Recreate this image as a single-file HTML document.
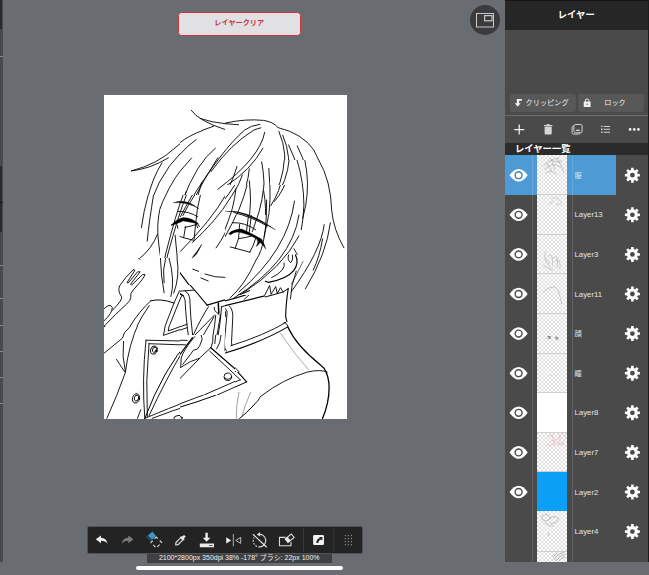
<!DOCTYPE html>
<html lang="ja">
<head>
<meta charset="utf-8">
<title>レイヤー</title>
<style>
*{box-sizing:border-box;margin:0;padding:0}
html,body{width:649px;height:575px;overflow:hidden}
body{background:#696c71;font-family:"Liberation Sans","Noto Sans CJK JP",sans-serif;position:relative;color:#fff}
.abs{position:absolute}
#leftstrip{left:0;top:0;width:2.700px;height:562px;background:#48494b}
#leftstrip i{position:absolute;left:0;width:2.700px;height:1px;background:#85878a}
#leftstrip b{position:absolute;left:0;width:2.400px;background:#2a2a2c}
#clearbtn{left:178px;top:12px;width:122.5px;height:23.5px;border:1.700px solid #cf3438;border-radius:3.500px;background:#e1e1e5;color:#cc3238;font-weight:bold;font-size:7.150px;text-align:center;line-height:21px}
#pip{left:470px;top:5px;width:30px;height:30px;border-radius:50%;background:#3b3b3d}
#canvas{left:104px;top:95px;width:243px;height:323.5px;background:#fff;overflow:hidden}
#panel{left:505px;top:0;width:144px;border-right:1px solid #1c1c1c;height:562px;background:#4a4a4a;overflow:hidden}
#phead{left:0;top:0;width:144px;height:30px;background:#262626;border-top:1.5px solid #151515;text-align:center;font-weight:bold;font-size:9.300px;padding-right:1.500px;line-height:28px}
.pbtn{top:93.5px;height:18.5px;background:#585858;border-radius:3px;font-size:7.200px;line-height:18px;color:#f0f0f0}
#hr1{left:0;top:114.5px;width:144px;height:1px;background:#6e6e6e}
#lhead{left:0;top:143px;width:144px;height:12px;background:#2b2b2b;font-weight:bold;font-size:9.300px;line-height:12px;padding-left:10px;white-space:nowrap}
#sel{left:0;top:155px;width:111px;height:39.800px;background:#4d9ad5}
.vline{top:155px;width:1.300px;height:407px;background:rgba(255,255,255,0.13)}
#thumbs{left:32px;top:155px;width:30px;height:407px;background-color:#fff;
 background-image:linear-gradient(45deg,#e0e0e0 25%,transparent 25%,transparent 75%,#e0e0e0 75%),linear-gradient(45deg,#e0e0e0 25%,transparent 25%,transparent 75%,#e0e0e0 75%);
 background-size:4px 4px;background-position:0 0,2px 2px}
#thumbs i{position:absolute;left:0;width:30px;height:1px;background:#cfcfcf}
.lname{left:69.5px;font-size:7.8px;color:#e4e4e4;height:12px;line-height:12px;white-space:nowrap}
.eye{left:4.5px;width:18px;height:12px}
.gear{left:120px;width:15px;height:15px}
#toolbar{left:87px;top:526px;width:275.5px;height:27.700px;background:#232323;border:1px solid #505255;border-radius:2px}
#status{left:147px;top:553.700px;width:184.500px;height:9.300px;background:#3f4042;font-size:7px;line-height:8.5px;text-align:center;color:#f2f2f2;white-space:nowrap}
#homebar{left:136px;top:566.3px;width:207px;height:4.2px;border-radius:2.2px;background:#fff}
.lname.cjk{font-size:7.200px}
</style>
</head>
<body>
<div id="leftstrip" class="abs"><b style="top:0;height:29px"></b><i style="top:55.500px"></i><b style="top:166px;height:66px"></b><i style="top:202px;background:#1a1a1a"></i><i style="top:265px"></i><i style="top:298.0px"></i><i style="top:324.5px"></i><i style="top:350.5px"></i><i style="top:377.0px"></i><i style="top:403.0px"></i></div>
<div id="clearbtn" class="abs">レイヤークリア</div>
<div id="pip" class="abs"><svg width="30" height="30" viewBox="470 5 30 30"><rect x="476.5" y="13.5" width="17" height="13.5" fill="none" stroke="#c9c9c9" stroke-width="1"/><rect x="484.6" y="15.6" width="7.4" height="5.2" fill="none" stroke="#c9c9c9" stroke-width="1.2"/></svg></div>
<div id="canvas" class="abs"><svg class="abs" style="left:0;top:0" width="243" height="323.500" viewBox="104 95 243 323.500" fill="none" stroke="#000" stroke-width="0.9" stroke-linecap="round" stroke-linejoin="round">
<defs>
<clipPath id="c0"><rect x="100" y="90" width="125" height="40"/><rect x="100" y="130" width="80" height="65"/></clipPath>
<clipPath id="c1"><rect x="225" y="90" width="45" height="40"/><rect x="270" y="90" width="80" height="70"/></clipPath>
<clipPath id="c2"><rect x="100" y="195" width="60" height="63"/></clipPath>
<clipPath id="c3"><rect x="0" y="0" width="0" height="0"/></clipPath>
<clipPath id="c4"><rect x="0" y="0" width="0" height="0"/></clipPath>
<clipPath id="c5"><rect x="0" y="0" width="0" height="0"/></clipPath>
<clipPath id="c6"><rect x="160" y="195" width="65" height="60"/><rect x="160" y="255" width="20" height="3"/></clipPath>
<clipPath id="c7"><rect x="225" y="215" width="59" height="45"/><rect x="284" y="215" width="6" height="39"/></clipPath>
<clipPath id="c8"><rect x="180" y="255" width="45" height="30"/><rect x="225" y="260" width="25" height="35"/></clipPath>
<clipPath id="c9"><rect x="100" y="258" width="80" height="68"/></clipPath>
<clipPath id="c10"><rect x="235" y="355" width="20" height="17"/></clipPath>
<clipPath id="c11"><rect x="250" y="260" width="15" height="35"/><rect x="265" y="260" width="85" height="62"/><rect x="284" y="254" width="66" height="6"/></clipPath>
<clipPath id="c12"><rect x="100" y="326" width="80" height="96"/></clipPath>
<clipPath id="c13"><rect x="180" y="395" width="75" height="27"/><rect x="235" y="372" width="20" height="23"/></clipPath>
<clipPath id="c14"><rect x="265" y="322" width="85" height="33"/><rect x="255" y="355" width="95" height="67"/></clipPath>
<clipPath id="c15"><rect x="180" y="285" width="45" height="50"/></clipPath>
<clipPath id="c16"><rect x="270" y="160" width="20" height="25"/><rect x="290" y="160" width="60" height="95"/></clipPath>
<clipPath id="c17"><rect x="180" y="130" width="45" height="65"/><rect x="225" y="120" width="45" height="65"/></clipPath>
<clipPath id="c18"><rect x="180" y="335" width="45" height="60"/><rect x="225" y="355" width="10" height="40"/></clipPath>
<clipPath id="c19"><rect x="225" y="295" width="40" height="60"/></clipPath>
<clipPath id="c20"><rect x="225" y="185" width="65" height="30"/></clipPath>
</defs>
<g clip-path="url(#c0)">
<path d="M 191.1 110.2 Q 198.2 120.8 225 129.5 M 200.2 118.5 Q 211.7 122.4 225 123.7 M 213.6 126.2 Q 190.5 133.3 175.1 147.8 Q 157.8 164.2 131.4 170.9 M 131.4 170.9 Q 150.1 169 168.4 157.8 M 162 162.8 Q 152 178.6 147.2 200 M 196.3 139.7 Q 165.5 161.3 151.6 200 M 191.5 157.4 Q 173.2 176.7 163.6 200 M 215.6 147.8 Q 194.4 167 182.8 200 M 225 148.7 Q 204 172.8 190.5 200 M 225 154.5 Q 207.9 176.7 196.3 200 M 225 185.3 L 217.9 188.6"/>
</g>
<g clip-path="url(#c1)">
<path d="M 225 123.1 Q 246.2 118.5 263.5 120.4 Q 273.2 121.8 278 127.6 Q 302 133.3 313.6 149.7 Q 325.2 170.9 330.9 200 M 225 123.7 L 238.5 124.7 M 265.4 133.3 Q 259.7 157.4 225 184.4 M 262.6 146.8 Q 250 167 230.8 180.5 M 278.9 131.4 Q 288.6 153.6 282.8 178.6 Q 279.9 190.2 275.5 200 M 282.8 135.3 Q 292.4 157.4 286.6 180.5 Q 282.8 192.1 276.6 198.8 M 288.6 144.9 Q 301.1 170.9 304 200 M 297.2 145.9 Q 309.7 169 309.7 200 M 261.6 162.2 Q 265.4 180.5 263.5 200 M 268.3 167 Q 271.2 184.4 267.8 200 M 249.1 169 Q 249.7 186.3 251.6 200 M 244.3 169.4 Q 236.6 186.3 228.9 200 M 236.2 167 Q 230.8 180.5 225 192.1 M 247.7 182.4 Q 243.3 192.1 239.4 200"/>
</g>
<g clip-path="url(#c2)">
<path d="M 148.2 195 Q 143.3 212.3 141.4 227.7 M 153.5 195 Q 149.1 222 147.2 241.2 M 163.6 195 Q 156.8 216.2 157.8 233.5 Q 152 248.9 138.5 259.5 M 157.8 234.5 Q 159.7 256.6 163.6 272 L 162.8 293.2 M 184.7 195 Q 173.2 225.8 163.6 266.3 M 190.5 195 Q 177 227.7 167.8 258.6 M 174.2 233.5 Q 165.5 254.7 176.1 287.4 M 169 256.6 Q 176.1 279.7 172.2 295.2 M 200.2 195 Q 190.5 218.1 180.5 241.2 M 196.3 195 Q 188.6 210.4 182.8 220 M 176.1 204.6 Q 188.6 201.7 197.8 210 M 179.9 211.9 Q 188.6 212.3 196.3 215.8 M 196.3 221 L 199.2 228.7 M 194 220 L 196.3 226.2 M 184.2 228.1 L 183.2 237 L 192.8 240.5 M 195.3 224.3 L 194.4 237 M 184.4 228.1 Q 188.6 225.8 194.8 225.8 M 225 196 Q 207.9 222 192.4 240.3 Q 186.7 246 179.9 251.2 M 225 201.7 Q 209.8 223.9 193.4 241.2 M 179 273 Q 186.7 283.6 207.9 305 M 192.1 269.2 L 200.2 271.7 M 205 274 Q 215.6 277.4 225 276.9 M 200.2 278.2 L 207.1 280.3 M 225 233.5 Q 220.4 241.2 217.5 247.4 M 118.3 287.1 Q 125 277.8 134.3 269.7 L 135.4 272 Q 130.8 277.8 128.9 282.1 L 130.8 283.6 Q 134.7 276.9 138.9 272 L 141.2 273.6 Q 136.6 279.7 132.7 285.5 L 134.7 286.7 Q 138.5 279.7 143.5 274.7 L 145.5 276.9 Q 140.4 283.6 136.6 288.6 Q 130.8 295.2 129.3 302.9 L 125 305 M 118.3 287.1 Q 119.3 293.2 122.1 299 Q 121.2 302.9 118.3 305 M 108.7 303.4 L 111.9 305 M 146.2 303.8 Q 157.8 298 174.2 302.1 M 172.8 305 L 180.9 292.3 Q 184.7 291.3 186.3 294.2 L 190.1 305 M 177 305 L 182.4 295.5 L 185.7 305 M 215.6 305 L 225 302.9"/>
<path stroke-width="0.8" d="M 173.2 202.3 Q 186.7 199.2 199.2 208.1"/>
<path stroke-width="2.0" d="M 171.6 225.2 Q 179 217.7 190.5 218.5 Q 197.3 220 200.2 224.3"/>
<path stroke-width="1.6" d="M 200.2 246 Q 196.3 251.8 193.4 257"/>
</g>
<g clip-path="url(#c3)">
<path stroke-width="0.8" d="M 226.5 211.4 Q 250 211.4 275.5 230.1"/>
<path d="M 232.7 214.3 Q 252 214.3 272.2 226.8 M 227.9 232.6 L 233.7 230.6 M 228.9 235.8 L 234.6 231.6 M 259.7 238.3 L 262.9 244.7 M 258.7 242.2 L 260.8 247.4 M 240 223.9 L 237.7 238.9 L 235 248.5 M 230.8 246.6 L 251.6 252.4 L 254.3 237.8 M 237.7 238.9 Q 246.2 237.8 253.9 237 M 232.7 223.9 Q 244.3 224.3 253.9 227.7 M 233.7 195 L 225 205.6 M 244.3 195 Q 236.6 214.3 227.3 230.6 M 251 195 Q 247.7 212.3 246.6 226.8 M 262.6 195 Q 257.4 216.2 254.3 233.5 M 266.4 195 Q 263.1 222 262.8 245.1 M 271.2 195 Q 268.3 206.6 267 222 M 278.9 195 L 270.8 206.6 M 294.7 200.8 Q 288.6 233.5 244.3 285.5 M 299.2 214.3 Q 290.5 248.9 236.6 292.3 M 299.2 235.8 Q 282.8 262.4 246.2 291.3 M 304.4 195 Q 303 210.4 299.2 226.8 M 307.8 195 L 305.9 206.6 M 330 195 Q 331.9 223.9 343.5 248.5 M 325.2 224.3 Q 321.3 252.8 304.9 287.8 M 321.3 239.7 Q 319.4 258.6 309.7 280.1 M 303 261.4 Q 296.3 275.9 292 291.3 M 256.2 252.8 Q 246.2 275.9 231.7 293.2 M 290.5 253.7 Q 286.2 259.5 289.7 263.6 Q 294 259.5 290.5 253.7 M 285.1 262.8 Q 284.7 271.1 271.2 275.9 M 264.5 297.1 L 269.7 285.9 L 272.2 293.6 L 275.7 287.1 L 278.2 293.2 L 288.6 287.8 M 288.9 287.4 Q 288.6 297.1 286.6 305 M 294.7 279.4 Q 290.5 289.4 291.6 297.5 M 240.4 301.9 Q 263.5 297.1 287.6 289"/>
<path stroke-width="2.0" d="M 227.9 233.9 Q 235.6 228.1 248.1 232.6 Q 259.7 237.8 264.5 247.4"/>
<path stroke-width="1.0" d="M 293.4 248.9 Q 299.2 258.6 294.3 270.1 Q 286.6 280.7 266.4 282.1"/>
<path stroke-width="1.6" d="M 225 300.5 Q 240.4 296.1 252 289.4"/>
</g>
<g clip-path="url(#c4)">
<path d="M 104.7 309.6 Q 110.6 303.2 114.4 306.8 Q 111.7 314.9 104.7 321.2 M 113.2 300 Q 121.2 305.3 130.8 300 M 104.2 352 L 123.8 334 L 125.5 331.8 Q 136.1 317 151.4 301.1 M 104.7 327.2 Q 119.1 315.9 134 300 M 123.8 342.4 Q 120.2 359.4 125.5 373.2 M 117 359.8 L 124.6 372.6 M 149.9 306.4 Q 131.8 334 126.5 370 Q 117 395.5 106.4 418.4 M 145.6 341.4 L 184.9 344.1 M 145.6 341.4 Q 142.4 380.6 144.6 418.4 M 148.8 345 Q 146.3 384.9 148 415.7 M 148.8 345 L 179.6 346.3 M 184.9 344.1 Q 163.7 370 145 418.4 M 180.6 355.6 Q 161.5 387 149.2 414.6 M 143.5 418 Q 170 406.1 225 386.6 M 152 418 Q 184.9 404 225 391.7 M 138.2 410.4 L 137.1 418.4 M 176.8 300 L 163.2 334.4 L 191.3 325 M 182.8 300 L 168.3 330.1 L 187.4 323.8 M 184.9 300 Q 189.1 312.7 191.3 325 M 213.5 315.9 L 181.7 355.2 L 180.2 367.5 L 193.4 358.4 L 210.4 350.1 L 215.7 331.8 Z M 184.9 357.3 L 193.4 347.8 L 196.6 350.9 L 200.8 342.4 L 204 344.6 L 210.4 321.2 M 201.9 300 L 210.4 305.3 L 218.8 302.1 L 225 300 M 215.7 308.5 L 217.8 312.7 M 216.3 311.7 Q 219.3 331.8 215.7 349.2 M 219.9 307.4 L 221.4 342.4 M 210.4 350.1 L 225 362 M 215.7 349.2 L 225 355.6"/>
<ellipse cx="153.7" cy="349.9" rx="2.8" ry="3.6" transform="rotate(20 153.7 349.9)"/>
<ellipse cx="154.3" cy="349.4" rx="1.7" ry="2.3" transform="rotate(20 154.3 349.4)"/>
<ellipse cx="135.7" cy="398.0" rx="3.2" ry="4.2" transform="rotate(15 135.7 398.0)"/>
<ellipse cx="136.3" cy="397.6" rx="1.9" ry="2.8" transform="rotate(15 136.3 397.6)"/>
<ellipse cx="178.1" cy="417.1" rx="3.4" ry="1.7" transform="rotate(-15 178.1 417.1)"/>
<ellipse cx="157.3" cy="418.4" rx="3.0" ry="1.5" transform="rotate(-15 157.3 418.4)"/>
<ellipse cx="206.7" cy="335.7" rx="1.5" ry="2.5" transform="rotate(25 206.7 335.7)"/>
<ellipse cx="225.0" cy="376.8" rx="2.1" ry="3.0" transform="rotate(20 225.0 376.8)"/>
</g>
<g clip-path="url(#c5)">
<path d="M 225 308.1 L 230.3 305.9 L 259 300 M 230.3 306.4 L 229.7 345.6 M 225 352 Q 256.8 343.5 288 326.5 M 230.3 346.3 Q 259 338.2 285.5 322.9 M 232.6 307.6 L 231.4 345 M 289.1 300 Q 285.5 312.7 288 326.5 M 326.9 370.5 Q 295 371.1 260 396.6 Q 254.7 406.1 240.9 418.4 M 225 360.1 L 246.2 381.7 L 225 392.7 M 225 366.2 L 240.3 380.6 L 225 387.4"/>
<path stroke-width="1.2" d="M 288 326.5 Q 297.2 344.6 326.9 370 Q 331.1 391.3 322.6 418.4"/>
<path stroke-width="0.6" stroke="#666" d="M 279.1 332.3 Q 290.8 353.1 307.8 369.2"/>
<path stroke-width="0.6" stroke="#555" d="M 238.2 393.4 Q 235.6 406.1 240.3 418 M 250.5 392.7 Q 245.2 404 243 415"/>
<ellipse cx="227.5" cy="376.4" rx="3.2" ry="3.4" transform="rotate(0 227.5 376.4)"/>
<ellipse cx="227.1" cy="376.0" rx="1.7" ry="1.9" transform="rotate(0 227.1 376.0)"/>
</g>
<g clip-path="url(#c6)">
<path d="M 177.8 211.4 Q 189.1 211.2 197.8 216.8 M 196.7 222.5 L 199.4 226.5 M 196.1 223.6 L 197.8 227.9 M 171.6 224.7 L 174.6 223.3 M 185.5 226.5 L 183.7 237.6 M 195.6 224.3 L 194.1 239.4 M 180 236.5 L 183.9 237.8 L 193.7 240.3 M 185 227.4 Q 190.2 226.3 194.7 225 M 177.3 225.2 L 177.8 228.4 M 183.2 195 Q 176.2 212.3 165.4 255 L 164.7 258.4 M 186.4 195 Q 178.9 213.3 167.6 255 L 166.9 258.4 M 192.4 195 Q 185.3 206.9 180.5 216.6 M 194.7 195 Q 188 205.2 182.9 215.5 M 200.4 195 Q 196.7 209 195.6 224.3 M 165.9 195 Q 162.2 201.5 160 209 M 175.1 235.1 L 177 255 L 177.3 258.4 M 225.8 195 Q 211.8 219.8 180.5 251.3 M 230 198.8 Q 216.1 220.9 192.4 242.5 M 230 211.2 L 226.3 211.7 M 229.6 220.3 Q 226.9 232.8 216.1 247.9 M 230 232.8 L 228 234.4"/>
<path fill="#000" stroke-width="0.300" d="M 173.5 202.6 Q 185.9 198 199 208.7 Q 187 201.7 173.5 202.6 Z M 171.3 225.2 Q 176.2 218.9 183.2 217.4 Q 192.4 217.7 198.8 224.1 Q 192.4 222.2 183.2 220.9 Q 177.3 223.7 171.3 225.4 Z M 201.8 244.4 Q 199 250.5 195.8 255.2 L 194.1 255.2 Q 197.2 251.1 200.8 245.5 Z"/>
</g>
<g clip-path="url(#c7)">
<path d="M 234 212.5 Q 252.4 217.3 267.5 226.1 M 232.4 222.7 Q 244.8 222.1 255.6 229.7 M 239.6 224.3 L 238.6 238.3 L 235.1 248.5 M 230.2 246.9 L 250 252.2 M 255.6 238.6 Q 253.4 246.4 249.8 252.2 M 238.6 238.6 Q 245.9 237.8 251.3 236.1 M 234.6 200 Q 229.7 219.4 220 241.8 M 242.9 200 Q 234 221.6 221.6 243.1 M 250.7 200 Q 248.3 216.2 246.5 231.3 M 252.6 200 Q 251.5 216.2 249.3 232.4 M 262.6 200 Q 257.8 216.2 252.4 231.5 M 270.7 200 Q 268.5 219.4 264 237.2 M 276.1 200 L 271.6 205.9 M 226.7 200 Q 223.2 205.4 220 210.2 M 222.2 200 L 220 203"/>
<path fill="#000" stroke-width="0.300" d="M 225.9 211.3 Q 247 209.3 275.5 229.9 Q 252.4 216.2 236.2 212.2 Q 230.8 211.4 225.9 211.3 Z M 228.6 233.7 Q 232.9 229.1 241.6 229.1 Q 252.4 233.7 261.5 239 Q 264.2 243.1 265.8 249.1 Q 262.6 244.4 260.1 242.6 Q 258.3 245.3 256.1 246.6 Q 259 242.3 256.7 239 Q 248 233.7 238.3 232.1 Q 233.5 231.9 230.8 234.7 Z"/>
</g>
<g clip-path="url(#c8)">
<path d="M 180.8 251.4 L 188.5 246 M 192.8 269.2 L 198.6 271.3 M 205.1 274.1 Q 214.4 277.7 224.9 277.4 M 200.8 277.9 L 208.2 281 M 221.2 305.6 Q 236.6 303.6 250 300.5 M 175.2 245 Q 176.2 259.8 179.2 271.5 M 179.2 271.9 Q 176.2 285.7 170 296.8 M 170 257.3 Q 173.7 272.1 173.7 285.7 M 178.6 292.8 L 193.4 290 M 179.2 292.8 L 171.2 313 M 182 294.6 L 174.3 313 M 182 294.3 Q 186.6 290.6 188.5 297.4 L 186.9 313 M 182.6 296.5 Q 185.4 299.2 185 313 M 170 302.3 L 174.3 302.7 M 208.2 305.6 L 204.8 313 M 213.1 307.9 L 215 313 M 223 307.9 L 224.9 313 M 227.9 306 Q 232.2 309.1 231 313 M 230.4 247.2 L 250 252.4 M 236.6 245 L 235.3 248.1"/>
<path stroke-width="1.1" d="M 178.9 271.1 Q 192.2 290.6 208.2 305.4 M 208.2 305.4 Q 229.2 299.2 250 290.4"/>
<path stroke-width="1.2" d="M 218.8 303.2 L 219.6 313"/>
<path fill="#000" stroke-width="0.300" d="M 200.8 245.7 Q 199.1 253.1 191.9 258.3 Q 195.4 252.6 198.6 246.7 Z"/>
</g>
<g clip-path="url(#c9)">
<path d="M 133.3 269.7 Q 124.7 277.7 119.7 285.7 Q 117.3 290.7 121.6 296.8 Q 122.8 299.9 112.3 310.4 M 133.3 269.7 L 134.9 270.3 L 127.1 282.4 L 128.1 283.1 L 137.6 271.8 L 140.1 271.8 L 130.6 284.1 L 131.6 285.1 L 142.5 274.6 L 145 274.6 Q 144.4 277.7 133.3 290 Q 129.6 293.7 130.8 297.4 Q 130.8 300.5 126.5 304.2 Q 116 313.5 104.3 326 M 104.3 308.5 Q 109.9 303 112.3 307.3 Q 112.3 313.5 104.3 320.5 M 150.8 300.8 Q 139.4 311 130.2 326 M 149.3 305.5 Q 141.9 315.9 137 326 M 179.5 290.7 L 174 303 L 165.1 326 M 180 299.3 L 169.3 326 M 160.4 258 Q 161 276.5 164.1 292.8 M 165.6 258 Q 162.2 270.3 164.1 282.7 M 169 258 Q 175.2 280.2 170.9 296.5 M 177 258 Q 180.1 276.5 173.7 293.1 M 138.2 258 L 140.1 259.2"/>
<path stroke-width="1.0" d="M 150.8 300.8 Q 160.4 298.1 174 303"/>
</g>
<g clip-path="url(#c10)">
<path stroke-width="1.2" d="M 218.5 303 L 219.2 313.3"/>
<path d="M 214.4 308.2 L 216.5 313 L 219.2 313.7 M 183.9 313 Q 189.4 317.2 189.4 323.4 L 191.1 335.5 M 190.8 313 L 191.9 322.7 L 193 336.6 M 170 329.9 L 188.3 323.7 M 170 333.6 L 187.8 328 M 170 341 L 186.9 343.1 M 203.3 313 L 191.1 335.9 L 170 369.9 M 213.3 315.8 L 183.2 350.5 L 180.4 367.4 L 195.7 360.2 L 210.5 349.8 Q 214.4 332.4 215.8 315.8 M 183.6 364.3 L 192.9 350.7 L 198.4 347.7 L 200.1 348.5 L 201.6 340.8 L 211.6 319.3 M 219.5 313.7 Q 217.1 331.1 211.9 346.6 M 222 308.9 Q 224.8 306.8 225.5 310.9 L 218.8 346 L 214.1 348.8 M 226.9 308.9 L 224.4 352.6 L 260 341.5 M 231 306.8 Q 233.1 322.7 231.4 346.6 L 260 336.3 M 221.6 307.5 Q 225.5 306.1 231 306.1 L 260 298.5 M 214.1 348.8 Q 229.6 361.6 239.3 372 M 209.5 352.1 L 226.2 372 M 203.3 356.3 L 188 372"/>
<path stroke-width="1.0" d="M 210.9 350.2 Q 225.5 360.2 235.9 372"/>
<ellipse cx="207.2" cy="335.9" rx="1.2" ry="2.9" transform="rotate(25 207.2 335.9)"/>
</g>
<g clip-path="url(#c11)">
<path stroke-width="1.2" d="M 295.5 255 Q 299.3 262.7 293.9 270.4 Q 287 278.9 268.5 282.4 L 265.4 281.2"/>
<path d="M 288.5 255 Q 287 260.4 290.8 262.7 Q 293.9 259.6 292.4 255 M 284.2 263 Q 286.2 270.4 271.6 277.7 M 263.9 296.9 L 269.6 285.5 L 271.1 294.3 L 275.7 286.6 L 277.3 293.5 L 280.4 287.7 L 283.1 292 M 296.2 271.2 Q 290.8 285.8 290.4 298.9 M 267.7 332 L 285.7 322.8 M 279.3 332 L 287.9 326.6"/>
<path stroke-width="1.0" d="M 250 300.9 Q 268.5 296.3 283.1 292 L 288.2 288.6"/>
<path stroke-width="1.1" d="M 288.2 288.6 Q 285.7 305.8 285.7 316.6 Q 287 324.3 291.3 332"/>
</g>
<g clip-path="url(#c12)">
<path d="M 104 353.3 L 122.6 338 L 124.3 332.8 Q 130.4 326.3 134.7 322 M 104 326.9 L 110.8 322 M 123.5 341.5 Q 121.7 356.7 125.4 372 M 116.5 359.4 L 124.7 371.9 M 139.1 322 Q 128.7 344.6 125.4 372.4 Q 117.4 395 106.9 418.4 M 146 340.2 L 186.9 341.1 M 146 340.2 Q 141.7 379.3 144.8 418.4 M 149 343.7 Q 145.5 381.1 147.3 416.7 M 149 343.7 L 182.5 344.9 M 181.7 352.9 Q 166 379.3 149 415.8 M 144.8 418.4 Q 169.5 408 190 400.2 M 152.1 418.4 Q 173 410.3 190 405.1 M 140.8 409.7 L 137.4 418.4 M 166 322 L 163.4 335.4 L 186.9 327.2 M 169.5 323.4 L 168.3 331 L 186.9 324.1 M 190 345.5 Q 183.4 353.3 180.8 367.5 L 190 362.8 M 190 351.5 L 185.1 359.9"/>
<path stroke-width="1.0" d="M 190 339.4 Q 163.4 368.9 144.8 418.4"/>
<ellipse cx="153.9" cy="350.1" rx="3.3" ry="4.2" transform="rotate(20 153.9 350.1)"/>
<ellipse cx="154.4" cy="349.8" rx="1.9" ry="2.6" transform="rotate(20 154.4 349.8)"/>
<ellipse cx="136.0" cy="398.4" rx="3.5" ry="4.7" transform="rotate(15 136.0 398.4)"/>
<ellipse cx="136.5" cy="398.1" rx="2.1" ry="3.0" transform="rotate(15 136.5 398.1)"/>
<ellipse cx="178.2" cy="417.6" rx="4.3" ry="2.1" transform="rotate(-10 178.2 417.6)"/>
</g>
<g clip-path="url(#c13)">
<path stroke-width="1.1" d="M 214.7 350 Q 229.9 362.5 246.6 381.9"/>
<path stroke-width="1.0" d="M 246.6 381.9 Q 214.7 397.1 180 407.1 M 270 390.2 Q 261.8 394.4 259 398.3 Q 254.9 405.5 239.6 418.5"/>
<path d="M 209.8 351.4 L 240.3 379.8 M 240.3 379.8 Q 210.5 393 180 403.8 M 180 354.2 L 181.7 365.9 L 200.8 358.3 L 209.8 351.4 M 184.2 350 L 182.5 363.2 M 180 379.8 Q 191.1 368 202.9 358 M 224.7 353.1 L 235.5 350 M 223.7 378.4 Q 227.8 382.6 231.6 377.7"/>
<path stroke-width="0.5" stroke="#444" d="M 238.9 392.3 Q 236.2 405.5 236.2 418.5 M 250.7 392.3 Q 244.5 405.5 241.7 416.8"/>
<ellipse cx="227.6" cy="376.6" rx="3.9" ry="4.2" transform="rotate(0 227.6 376.6)"/>
<ellipse cx="180.0" cy="418.2" rx="2.5" ry="1.4" transform="rotate(-10 180.0 418.2)"/>
</g>
<g clip-path="url(#c14)">
<path d="M 283.7 322 Q 288.1 323.7 288.1 327.6 M 327.2 372.1 Q 321.1 369 307.2 372.1 Q 282.8 379.4 262 395.4 L 259.9 397.2 Q 258.5 401.2 255 403.8"/>
<path stroke-width="1.3" d="M 288.1 327.6 Q 296.8 346.4 321.1 365.5 Q 327.2 369.8 328.9 382.9 Q 330.2 400.3 322.5 418.4"/>
<path stroke-width="0.5" stroke="#555" d="M 280.2 332.8 Q 292.4 351.6 308.1 369.3"/>
</g>
<g clip-path="url(#c15)">
<path stroke-width="1.0" d="M 178.9 291.3 L 165 324.9 M 165 300.3 L 174.4 302.6 M 177 285 Q 174.2 291.5 170.7 296.6"/>
<path d="M 178.9 291.3 L 193.7 290.1 M 184.9 290.7 Q 189.2 293.3 189.8 298.9 Q 190.4 317.4 192.6 335 M 180.3 293.8 Q 184.4 295.2 185 299.8 Q 186.3 322 188.3 335 M 181.8 295.4 L 166.4 330.5 M 165 332.3 L 186.8 324.3 M 165 335 L 187.2 327.7 M 208.5 306.7 Q 202 316.4 193.2 335 M 214.2 307.2 Q 213.1 310.4 219.1 314.6 M 214.5 315 L 195 335 M 214 316.9 L 203.4 335 M 215.7 315.5 Q 214.9 324.8 213.1 335 M 220.5 314.8 L 217 335 M 221.6 306.7 Q 220.5 322 218.2 335 M 221.4 306.7 L 225 305.8"/>
<path stroke-width="1.3" d="M 180.3 293.8 L 183.3 295.7"/>
<path stroke-width="1.1" d="M 190 285 Q 198.3 294.2 207.1 305.1"/>
<path stroke-width="1.2" d="M 207.1 305.1 L 225 299.8"/>
<path stroke-width="1.5" d="M 218.3 303 L 218.8 313.2"/>
</g>
<g clip-path="url(#c16)">
<path d="M 318.7 160 Q 330.9 180.9 331.7 210.4 Q 333.5 229.6 343.9 247.8 M 297 160 Q 303.9 182.6 303.9 205.2 Q 303.4 219.1 301.3 229.6 M 304.8 160 Q 309.7 182.6 305.7 205.6 L 302.7 218.3 M 284.3 160 Q 283 182.6 270 204.3 M 289.1 160 Q 287.4 180.9 274.3 199.7 M 270 226.1 L 275.2 229.6 M 294 248.7 Q 297.8 253 298.2 260 M 289.1 253.9 L 292.6 260"/>
</g>
<g clip-path="url(#c17)">
<path d="M 203.1 130.3 Q 189.2 135.4 180 142.6 M 196.2 139.6 Q 186.9 146.2 180 154.3 M 191.6 158 L 180 171.3 M 215.4 148.2 Q 196.9 162.4 182.3 201.2 M 260 124.3 Q 250.9 125.4 244.7 130 Q 221.6 150 189.2 202.4 M 260.9 127.8 Q 257 128.8 254 130 Q 230.8 143.9 210.8 171.9 M 217.8 157.7 Q 203.1 180.8 190.8 205 M 264.7 132.3 Q 260.1 157.7 217.8 189.3 M 262.9 148.2 Q 250.9 170.1 226.2 185.8 M 237 166.5 Q 230.8 187 219.3 205 M 242.4 175 Q 235.5 193.2 226.5 205 M 249.3 168.8 Q 247.8 187 238.6 205 M 249.3 180.8 Q 251.2 193.2 251.6 205 M 261.7 161.9 Q 265.5 180.8 263.2 205 M 268.8 168.5 Q 270.9 187 269.4 205 M 280 187.3 Q 275.5 197.8 271.7 205 M 180 201.3 Q 187.7 200.1 194.2 203.7 M 201.6 182.7 Q 197.7 196.3 195.4 205 M 186.2 191.6 L 181.5 205"/>
</g>
<g clip-path="url(#c18)">
<path d="M 165 339.9 L 187.1 340.4 M 165 343.6 L 185.5 344.9 M 194.7 336.6 Q 183.3 350.1 181.2 358.2 L 180.7 367.4 M 180.7 367.4 L 190.3 361.7 L 199.5 358.2 L 210.8 347.7 M 201.1 335 L 202.2 339.3 L 199.7 345.8 L 197.4 349 L 193.3 350.3 L 190.3 354.6 L 182.8 364.3 M 199.5 358.5 L 165 393.8 M 209.8 351.2 L 235 374.7 M 235 381.4 L 204 395 M 235 387 L 217.3 395 M 213 335 Q 213.5 341.5 211.2 347.1 M 215.7 335 L 214.8 343.6 M 221.1 335 Q 220.5 343.6 216.6 349 M 225.4 335 L 225 351.2 L 235 347.1 M 231 335 L 230.4 346 L 235 344.3 M 224.5 377.6 Q 228.1 381.4 231.3 377.3"/>
<path stroke-width="1.2" d="M 192.5 337.7 Q 177.9 356.6 165 376.5 M 210.8 347.7 L 235 368.7"/>
<ellipse cx="227.8" cy="376.8" rx="3.8" ry="3.8" transform="rotate(0 227.8 376.8)"/>
</g>
<g clip-path="url(#c19)">
<path stroke-width="1.1" d="M 199.1 295 L 207.1 304.9 L 218.9 302.3 M 220.9 306.6 Q 240.3 302 265 295.9 M 221.5 306.9 Q 220.9 327.4 214.2 348.1"/>
<path stroke-width="1.3" d="M 218.9 302.3 Q 232.8 299.3 245.7 295"/>
<path stroke-width="1.8" d="M 218.5 303.1 L 219.4 314.2"/>
<path d="M 214.6 307.4 Q 212.8 311.2 219.3 314.4 M 207.1 304.9 L 195 330.8 M 215.3 315.3 Q 204.7 327.4 200.4 338.1 L 199.5 345.7 L 195 348.9 M 213.3 318.7 Q 206.9 329.5 204.2 338.1 M 216 315.3 Q 215 329.5 211.2 347 M 219.6 314.6 Q 217.7 331.7 212.8 346.2 M 223.3 307.7 Q 227.4 308.5 227.1 313.3 L 224.3 342.5 Q 224.1 348.9 226.5 351.3 M 223.9 308.8 Q 226.3 311.2 225.7 316.6 M 229.3 305.8 Q 232.8 309 232.8 316.6 L 231.5 342.5 L 231.9 345.7 M 209 350.2 L 216 355 M 244.1 299.5 L 248.9 295"/>
<path stroke-width="1.2" d="M 211.2 347.3 L 221.4 355"/>
<ellipse cx="207.1" cy="336.5" rx="1.2" ry="3.0" transform="rotate(25 207.1 336.5)"/>
</g>
<g clip-path="url(#c20)">
<path d="M 241.5 175 Q 229.8 193.5 215 212.2 M 243.1 176.2 Q 233.5 194.7 215 220.4 M 239.7 175.6 Q 227.3 183 217.5 189.5 M 236 188.8 Q 233.5 209.5 226.7 225 M 248.9 175 Q 247.3 192.3 232.3 225 M 248.9 180.2 Q 252.6 199.7 248 225 M 264.3 175 Q 264.3 199.7 254.7 225 M 263.7 191 Q 266.8 209.5 264.9 223.1 M 269.2 175 Q 271.7 199.7 267.4 225 M 282.8 175 Q 280.3 191 270.7 205.8 M 287.7 175 Q 285.3 188.6 274.4 201.5 M 295 201.5 L 288 225 M 234 212.5 Q 252.4 217.3 267.5 226.1"/>
<path fill="#000" stroke-width="0.300" d="M 225.9 211.3 Q 247 209.3 275.5 229.9 Q 252.4 216.2 236.2 212.2 Q 230.8 211.4 225.9 211.3 Z"/>
</g>
<path d="M294.5 201 Q288 250 239 292 M299 215 Q292 262 234 298 M299 236 Q282 268 243 293 M266.6 200 Q267 245 256 260 Q245 285 230 298 M324.2 224.7 Q321 251 291.3 291.7 M330.4 222.8 Q326.5 254.2 305.4 288.9 M322.6 238.8 Q319.5 257.3 313.2 270.1 M230.9 345.7 Q265 335 285.7 322.5"/>
<path stroke-width="0.6" d="M303 261.5 Q297.5 273 291.3 284.2"/>
<path stroke-width="1.1" d="M225.4 353 Q262 342 287.8 326.9"/>
</svg></div>
<div id="panel" class="abs">
  <div id="phead" class="abs">レイヤー</div>
  <div class="pbtn abs" style="left:4.5px;width:66px;padding-left:16px">クリッピング</div>
  <div class="pbtn abs" style="left:73px;width:66px;padding-left:26.200px">ロック</div>
  <div id="hr1" class="abs"></div>
  <div id="lhead" class="abs">レイヤー一覧</div>
  <div id="sel" class="abs"></div>
  <div class="vline abs" style="left:27px"></div>
  <div class="vline abs" style="left:67px"></div>
  <div id="thumbs" class="abs"><b style="position:absolute;left:0;top:237.6px;width:30px;height:39.6px;background:#fff"></b><b style="position:absolute;left:0;top:316.8px;width:30px;height:39.6px;background:#0c9ff6"></b><i style="top:39.1px"></i><i style="top:78.7px"></i><i style="top:118.3px"></i><i style="top:157.9px"></i><i style="top:197.5px"></i><i style="top:237.1px"></i><i style="top:276.7px"></i><i style="top:316.3px"></i><i style="top:395.5px"></i><svg style="position:absolute;left:0;top:0" width="30" height="407" viewBox="0 0 30 407" fill="none" stroke="#9b9b9b" stroke-width="0.550" stroke-linecap="round"><path d="M6.600 10.800Q12 4 22.400 2.900M7.700 14.200Q15 6 23.500 12M14.500 5.200L17.900 14.200M20.100 4Q24 8 26.900 17.600M10 8.600L14.500 15.400M12 3Q18 9 25 6M9 18Q14 14 19 19"/><path stroke="#b5b5b5" d="M14.500 43.600Q20 40 24.700 48.200M12.200 49.300L16.800 45.900M19 50Q22 47 25 51"/><path stroke="#a8a8a8" d="M8.800 96.800Q5 104 13.400 112.600M11.100 101.300Q16 95 15.600 110.400M15.600 103.600Q22 96 20.100 112.600M6.600 110.400Q11 114 15.600 114.900M18 106Q24 102 23 114M9 104L13 109"/><path stroke="#9a9a9a" stroke-dasharray="2.500 1.200" d="M6.600 137.600Q9 133 16.800 132Q22 133 23.500 144.400L24.700 149"/><path stroke="#555" stroke-width="0.800" d="M10.800 181.300L13.800 182M11 183L13.500 183.400M18.500 182L21 182.800M18.800 183.800L20.800 184.200"/><path stroke="#c4c4c4" d="M12.500 220.200L14.500 220M18.200 220.200L20 220.500"/><path stroke="#eaa6aa" d="M11 282Q14 278 17 283T23 281T29 284M13 287Q16 283 20 288T27 286M15 279L18 291M22 279Q25 285 21 291M10 290Q14 292 17 289M24 288L29 291"/><path stroke="#9a9a9a" d="M5 361Q10 357 14 363Q10 368 6 365ZM12 364Q17 359 22 364Q18 370 13 368M8 368Q12 372 16 371M11 378L12 381"/><path stroke="#8a8a8a" d="M17 405Q20 399 27 397M19 406Q23 400 28 399M22 406Q25 402 28 402M16 402L20 398"/></svg></div>
<svg class="abs" style="left:0;top:0" width="144" height="160" viewBox="505 0 144 160">
<!-- clipping icon -->
<path fill="#f2f2f2" d="M516.8 98.900H521.9V100.800H519.1V103.300H520.600L517.700 106.800L514.800 103.300H516.800Z"/>
<!-- lock icon -->
<path fill="#f2f2f2" fill-rule="evenodd" d="M584.2 101.6h5.9a.5.5 0 0 1 .5.5v4.3a.5.5 0 0 1-.5.5h-5.9a.5.5 0 0 1-.5-.5v-4.3a.5.5 0 0 1 .5-.5z M586.5 104.2a.7.7 0 1 0 1.4 0a.7.7 0 1 0-1.4 0z"/>
<path fill="none" stroke="#f2f2f2" stroke-width="1" d="M585.3 101.8v-1a1.85 1.85 0 0 1 3.7 0v1"/>
<!-- plus -->
<path stroke="#f4f4f4" stroke-width="1.25" fill="none" d="M514.2 129.5h10M519.2 124.5v10"/>
<!-- trash -->
<path fill="#d6d6d6" d="M544.6 126.6h7.1v6.9a1 1 0 0 1-1 1h-5.1a1 1 0 0 1-1-1z M543.9 124.9h2.6l.6-.9h2.1l.6.9h2.6v1.1h-8.5z"/>
<!-- copy -->
<rect x="572.1" y="126.1" width="8" height="8" rx="1.4" fill="none" stroke="#cfcfcf" stroke-width="1"/>
<rect x="573.9" y="124.5" width="8.2" height="8.2" rx="1.4" fill="#4a4a4a" stroke="#cfcfcf" stroke-width="1"/>
<path fill="#cfcfcf" d="M575.6 130.9l1.5-2 1 1.3.9-.9 1.5 1.600z"/>
<!-- list -->
<path fill="#d0d0d0" d="M601 125.700h1.500v1.400h-1.500z M601 128.600h1.500v1.400h-1.500z M601 131.600h1.500v1.400h-1.500z M603.600 125.900h6.400v1h-6.400z M603.600 128.800h6.400v1h-6.400z M603.600 131.800h6.400v1h-6.400z"/>
<!-- dots -->
<circle cx="630.1" cy="129.400" r="1.350" fill="#f2f2f2"/><circle cx="634.25" cy="129.400" r="1.350" fill="#f2f2f2"/><circle cx="638.4" cy="129.400" r="1.350" fill="#f2f2f2"/>
</svg>

<svg class="abs" style="left:0;top:0" width="144" height="562" viewBox="505 0 144 562">
<path fill="#fff" d="M509.50 175.20 Q518.60 162.60 527.70 175.20 Q518.60 187.80 509.50 175.20Z"/>
<circle cx="518.60" cy="175.20" r="3.45" fill="none" stroke="#3e7fb0" stroke-width="1.4"/>
<path fill="#fff" fill-rule="evenodd" d="M631.02 169.88 L631.15 167.70 L633.65 167.70 L633.78 169.88 L635.19 170.46 L636.81 169.01 L638.59 170.79 L637.14 172.41 L637.72 173.82 L639.90 173.95 L639.90 176.45 L637.72 176.58 L637.14 177.99 L638.59 179.61 L636.81 181.39 L635.19 179.94 L633.78 180.52 L633.65 182.70 L631.15 182.70 L631.02 180.52 L629.61 179.94 L627.99 181.39 L626.21 179.61 L627.66 177.99 L627.08 176.58 L624.90 176.45 L624.90 173.95 L627.08 173.82 L627.66 172.41 L626.21 170.79 L627.99 169.01 L629.61 170.46Z M630.00 175.20 a2.40 2.40 0 1 0 4.80 0 a2.40 2.40 0 1 0 -4.80 0Z"/>
<path fill="#fff" d="M509.50 214.80 Q518.60 202.20 527.70 214.80 Q518.60 227.40 509.50 214.80Z"/>
<circle cx="518.60" cy="214.80" r="3.45" fill="none" stroke="#4a4a4a" stroke-width="1.4"/>
<path fill="#fff" fill-rule="evenodd" d="M631.02 209.48 L631.15 207.30 L633.65 207.30 L633.78 209.48 L635.19 210.06 L636.81 208.61 L638.59 210.39 L637.14 212.01 L637.72 213.42 L639.90 213.55 L639.90 216.05 L637.72 216.18 L637.14 217.59 L638.59 219.21 L636.81 220.99 L635.19 219.54 L633.78 220.12 L633.65 222.30 L631.15 222.30 L631.02 220.12 L629.61 219.54 L627.99 220.99 L626.21 219.21 L627.66 217.59 L627.08 216.18 L624.90 216.05 L624.90 213.55 L627.08 213.42 L627.66 212.01 L626.21 210.39 L627.99 208.61 L629.61 210.06Z M630.00 214.80 a2.40 2.40 0 1 0 4.80 0 a2.40 2.40 0 1 0 -4.80 0Z"/>
<path fill="#fff" d="M509.50 254.40 Q518.60 241.80 527.70 254.40 Q518.60 267.00 509.50 254.40Z"/>
<circle cx="518.60" cy="254.40" r="3.45" fill="none" stroke="#4a4a4a" stroke-width="1.4"/>
<path fill="#fff" fill-rule="evenodd" d="M631.02 249.08 L631.15 246.90 L633.65 246.90 L633.78 249.08 L635.19 249.66 L636.81 248.21 L638.59 249.99 L637.14 251.61 L637.72 253.02 L639.90 253.15 L639.90 255.65 L637.72 255.78 L637.14 257.19 L638.59 258.81 L636.81 260.59 L635.19 259.14 L633.78 259.72 L633.65 261.90 L631.15 261.90 L631.02 259.72 L629.61 259.14 L627.99 260.59 L626.21 258.81 L627.66 257.19 L627.08 255.78 L624.90 255.65 L624.90 253.15 L627.08 253.02 L627.66 251.61 L626.21 249.99 L627.99 248.21 L629.61 249.66Z M630.00 254.40 a2.40 2.40 0 1 0 4.80 0 a2.40 2.40 0 1 0 -4.80 0Z"/>
<path fill="#fff" d="M509.50 294.00 Q518.60 281.40 527.70 294.00 Q518.60 306.60 509.50 294.00Z"/>
<circle cx="518.60" cy="294.00" r="3.45" fill="none" stroke="#4a4a4a" stroke-width="1.4"/>
<path fill="#fff" fill-rule="evenodd" d="M631.02 288.68 L631.15 286.50 L633.65 286.50 L633.78 288.68 L635.19 289.26 L636.81 287.81 L638.59 289.59 L637.14 291.21 L637.72 292.62 L639.90 292.75 L639.90 295.25 L637.72 295.38 L637.14 296.79 L638.59 298.41 L636.81 300.19 L635.19 298.74 L633.78 299.32 L633.65 301.50 L631.15 301.50 L631.02 299.32 L629.61 298.74 L627.99 300.19 L626.21 298.41 L627.66 296.79 L627.08 295.38 L624.90 295.25 L624.90 292.75 L627.08 292.62 L627.66 291.21 L626.21 289.59 L627.99 287.81 L629.61 289.26Z M630.00 294.00 a2.40 2.40 0 1 0 4.80 0 a2.40 2.40 0 1 0 -4.80 0Z"/>
<path fill="#fff" d="M509.50 333.60 Q518.60 321.00 527.70 333.60 Q518.60 346.20 509.50 333.60Z"/>
<circle cx="518.60" cy="333.60" r="3.45" fill="none" stroke="#4a4a4a" stroke-width="1.4"/>
<path fill="#fff" fill-rule="evenodd" d="M631.02 328.28 L631.15 326.10 L633.65 326.10 L633.78 328.28 L635.19 328.86 L636.81 327.41 L638.59 329.19 L637.14 330.81 L637.72 332.22 L639.90 332.35 L639.90 334.85 L637.72 334.98 L637.14 336.39 L638.59 338.01 L636.81 339.79 L635.19 338.34 L633.78 338.92 L633.65 341.10 L631.15 341.10 L631.02 338.92 L629.61 338.34 L627.99 339.79 L626.21 338.01 L627.66 336.39 L627.08 334.98 L624.90 334.85 L624.90 332.35 L627.08 332.22 L627.66 330.81 L626.21 329.19 L627.99 327.41 L629.61 328.86Z M630.00 333.60 a2.40 2.40 0 1 0 4.80 0 a2.40 2.40 0 1 0 -4.80 0Z"/>
<path fill="#fff" d="M509.50 373.20 Q518.60 360.60 527.70 373.20 Q518.60 385.80 509.50 373.20Z"/>
<circle cx="518.60" cy="373.20" r="3.45" fill="none" stroke="#4a4a4a" stroke-width="1.4"/>
<path fill="#fff" fill-rule="evenodd" d="M631.02 367.88 L631.15 365.70 L633.65 365.70 L633.78 367.88 L635.19 368.46 L636.81 367.01 L638.59 368.79 L637.14 370.41 L637.72 371.82 L639.90 371.95 L639.90 374.45 L637.72 374.58 L637.14 375.99 L638.59 377.61 L636.81 379.39 L635.19 377.94 L633.78 378.52 L633.65 380.70 L631.15 380.70 L631.02 378.52 L629.61 377.94 L627.99 379.39 L626.21 377.61 L627.66 375.99 L627.08 374.58 L624.90 374.45 L624.90 371.95 L627.08 371.82 L627.66 370.41 L626.21 368.79 L627.99 367.01 L629.61 368.46Z M630.00 373.20 a2.40 2.40 0 1 0 4.80 0 a2.40 2.40 0 1 0 -4.80 0Z"/>
<path fill="#fff" d="M509.50 412.80 Q518.60 400.20 527.70 412.80 Q518.60 425.40 509.50 412.80Z"/>
<circle cx="518.60" cy="412.80" r="3.45" fill="none" stroke="#4a4a4a" stroke-width="1.4"/>
<path fill="#fff" fill-rule="evenodd" d="M631.02 407.48 L631.15 405.30 L633.65 405.30 L633.78 407.48 L635.19 408.06 L636.81 406.61 L638.59 408.39 L637.14 410.01 L637.72 411.42 L639.90 411.55 L639.90 414.05 L637.72 414.18 L637.14 415.59 L638.59 417.21 L636.81 418.99 L635.19 417.54 L633.78 418.12 L633.65 420.30 L631.15 420.30 L631.02 418.12 L629.61 417.54 L627.99 418.99 L626.21 417.21 L627.66 415.59 L627.08 414.18 L624.90 414.05 L624.90 411.55 L627.08 411.42 L627.66 410.01 L626.21 408.39 L627.99 406.61 L629.61 408.06Z M630.00 412.80 a2.40 2.40 0 1 0 4.80 0 a2.40 2.40 0 1 0 -4.80 0Z"/>
<path fill="#fff" d="M509.50 452.40 Q518.60 439.80 527.70 452.40 Q518.60 465.00 509.50 452.40Z"/>
<circle cx="518.60" cy="452.40" r="3.45" fill="none" stroke="#4a4a4a" stroke-width="1.4"/>
<path fill="#fff" fill-rule="evenodd" d="M631.02 447.08 L631.15 444.90 L633.65 444.90 L633.78 447.08 L635.19 447.66 L636.81 446.21 L638.59 447.99 L637.14 449.61 L637.72 451.02 L639.90 451.15 L639.90 453.65 L637.72 453.78 L637.14 455.19 L638.59 456.81 L636.81 458.59 L635.19 457.14 L633.78 457.72 L633.65 459.90 L631.15 459.90 L631.02 457.72 L629.61 457.14 L627.99 458.59 L626.21 456.81 L627.66 455.19 L627.08 453.78 L624.90 453.65 L624.90 451.15 L627.08 451.02 L627.66 449.61 L626.21 447.99 L627.99 446.21 L629.61 447.66Z M630.00 452.40 a2.40 2.40 0 1 0 4.80 0 a2.40 2.40 0 1 0 -4.80 0Z"/>
<path fill="#fff" d="M509.50 492.00 Q518.60 479.40 527.70 492.00 Q518.60 504.60 509.50 492.00Z"/>
<circle cx="518.60" cy="492.00" r="3.45" fill="none" stroke="#4a4a4a" stroke-width="1.4"/>
<path fill="#fff" fill-rule="evenodd" d="M631.02 486.68 L631.15 484.50 L633.65 484.50 L633.78 486.68 L635.19 487.26 L636.81 485.81 L638.59 487.59 L637.14 489.21 L637.72 490.62 L639.90 490.75 L639.90 493.25 L637.72 493.38 L637.14 494.79 L638.59 496.41 L636.81 498.19 L635.19 496.74 L633.78 497.32 L633.65 499.50 L631.15 499.50 L631.02 497.32 L629.61 496.74 L627.99 498.19 L626.21 496.41 L627.66 494.79 L627.08 493.38 L624.90 493.25 L624.90 490.75 L627.08 490.62 L627.66 489.21 L626.21 487.59 L627.99 485.81 L629.61 487.26Z M630.00 492.00 a2.40 2.40 0 1 0 4.80 0 a2.40 2.40 0 1 0 -4.80 0Z"/>
<path fill="#fff" fill-rule="evenodd" d="M631.02 526.28 L631.15 524.10 L633.65 524.10 L633.78 526.28 L635.19 526.86 L636.81 525.41 L638.59 527.19 L637.14 528.81 L637.72 530.22 L639.90 530.35 L639.90 532.85 L637.72 532.98 L637.14 534.39 L638.59 536.01 L636.81 537.79 L635.19 536.34 L633.78 536.92 L633.65 539.10 L631.15 539.10 L631.02 536.92 L629.61 536.34 L627.99 537.79 L626.21 536.01 L627.66 534.39 L627.08 532.98 L624.90 532.85 L624.90 530.35 L627.08 530.22 L627.66 528.81 L626.21 527.19 L627.99 525.41 L629.61 526.86Z M630.00 531.60 a2.40 2.40 0 1 0 4.80 0 a2.40 2.40 0 1 0 -4.80 0Z"/>
</svg>
<div class="lname cjk abs" style="top:169.8px">服</div>
<div class="lname abs" style="top:209.4px">Layer13</div>
<div class="lname abs" style="top:249.0px">Layer3</div>
<div class="lname abs" style="top:288.6px">Layer11</div>
<div class="lname cjk abs" style="top:328.2px">顔</div>
<div class="lname cjk abs" style="top:367.8px">瞳</div>
<div class="lname abs" style="top:407.4px">Layer8</div>
<div class="lname abs" style="top:447.0px">Layer7</div>
<div class="lname abs" style="top:486.6px">Layer2</div>
<div class="lname abs" style="top:526.2px">Layer4</div>
</div>
<div id="toolbar" class="abs"></div>
<svg class="abs" style="left:0;top:520px" width="649" height="55" viewBox="0 520 649 55">
<!-- separators -->
<path stroke="#3b3b3b" stroke-width="1" d="M303.600 528v23.500M333.800 528v23.500"/>
<!-- undo -->
<path fill="#ececec" d="M95.800 539.300l5.200-3.900v2.300c3.400.1 6 2.200 6.500 6-1.500-2.100-3.500-2.900-6.500-2.900v2.400z"/>
<!-- redo -->
<path fill="#7b7b7b" d="M133.500 539.300l-5.200-3.900v2.300c-3.400.1-6 2.200-6.500 6 1.500-2.100 3.500-2.900 6.500-2.900v2.400z"/>
<!-- eraser + dashed -->
<path fill="#3d97c2" d="M152.300 531.400l3.800 4.500-5.500 5.100-4.400-3.700z"/>
<path fill="#1d3d55" d="M146.200 537.300l1.600-1.500 4.300 3.800-1.500 1.400z"/>
<path fill="none" stroke="#d8d8d8" stroke-width="1.100" stroke-dasharray="3.200 2.600" stroke-dashoffset="1" d="M156.300 537.100l5.400 5.400-5.400 5.400-5.400-5.400z"/>
<!-- eyedropper -->
<g transform="rotate(45 180.400 540.200)" fill="none" stroke="#ececec" stroke-width="1.100">
<path d="M178.900 538.200h3v6.800l-1.500 1.800-1.500-1.800z"/>
<path d="M177.900 537.400h5" stroke-width="1.500"/>
<path d="M179.300 536.800v-1.700a1.100 1.100 0 0 1 2.200 0v1.700z" fill="#ececec" stroke-width=".6"/>
</g>
<!-- download -->
<path fill="#ececec" d="M205.400 532.800h2.400v5h2.600l-3.800 3.900-3.800-3.900h2.600z"/>
<path fill="#ececec" fill-rule="evenodd" d="M199.800 543.500h14.200v3.700h-14.200z M209 544.900h3.700v.9h-3.700z"/>
<!-- flip -->
<path fill="#ececec" d="M226.200 537.200l5 3.200-5 3.200z"/>
<path stroke="#d0d0d0" stroke-width=".8" d="M233.300 534v12.400"/>
<path fill="none" stroke="#d0d0d0" stroke-width=".9" d="M240.700 537.400l-4.900 3 4.900 3z"/>
<!-- rotate reset -->
<path fill="none" stroke="#e4e4e4" stroke-width="1.100" d="M258.500 534.400a6.300 6.300 0 1 1 1.500 12.500"/>
<path fill="none" stroke="#e4e4e4" stroke-width="1.100" stroke-dasharray="1.600 1.500" d="M260 546.900a6.300 6.300 0 0 1-6-9.400"/>
<path fill="#e4e4e4" d="M256.800 534.600l3.300-2.300v4.300z"/>
<path stroke="#e4e4e4" stroke-width="1.200" d="M253 534.300l13.700 13"/>
<!-- box + eraser -->
<path fill="none" stroke="#dcdcdc" stroke-width="1.100" d="M285.500 537.400h-6v8.300h11.500v-3.800"/>
<g transform="rotate(-40 289.600 538.200)"><rect x="285.600" y="536" width="8" height="4.500" fill="#232323" stroke="#e8e8e8" stroke-width="1"/><rect x="285.600" y="536" width="3.300" height="4.500" fill="#e8e8e8"/></g>
<!-- external link -->
<rect x="313.100" y="534.900" width="10.900" height="10.200" rx="1.300" fill="#f2f2f2"/>
<path fill="#232323" d="M318.800 537h3.600v3.600l-1.200-1.200c-1.600.3-2.700 1.500-3 3.500h-1.900c.1-2.600 1.500-4.400 3.700-4.800z"/>
<!-- grid -->
<g fill="#9c9c9c">
<rect x="344.800" y="535.100" width="1.100" height="1.100"/><rect x="347.800" y="535.100" width="1.100" height="1.100"/><rect x="350.900" y="535.100" width="1.100" height="1.100"/>
<rect x="344.800" y="538.100" width="1.100" height="1.100"/><rect x="347.800" y="538.100" width="1.100" height="1.100"/><rect x="350.900" y="538.100" width="1.100" height="1.100"/>
<rect x="344.800" y="541.200" width="1.100" height="1.100"/><rect x="347.800" y="541.200" width="1.100" height="1.100"/><rect x="350.900" y="541.200" width="1.100" height="1.100"/>
<rect x="344.800" y="544.200" width="1.100" height="1.100"/><rect x="347.800" y="544.200" width="1.100" height="1.100"/><rect x="350.900" y="544.200" width="1.100" height="1.100"/>
</g>
</svg>

<div id="status" class="abs">2100*2800px 350dpi 38% -178° ブラシ: 22px 100%</div>
<div id="homebar" class="abs"></div>
</body>
</html>
